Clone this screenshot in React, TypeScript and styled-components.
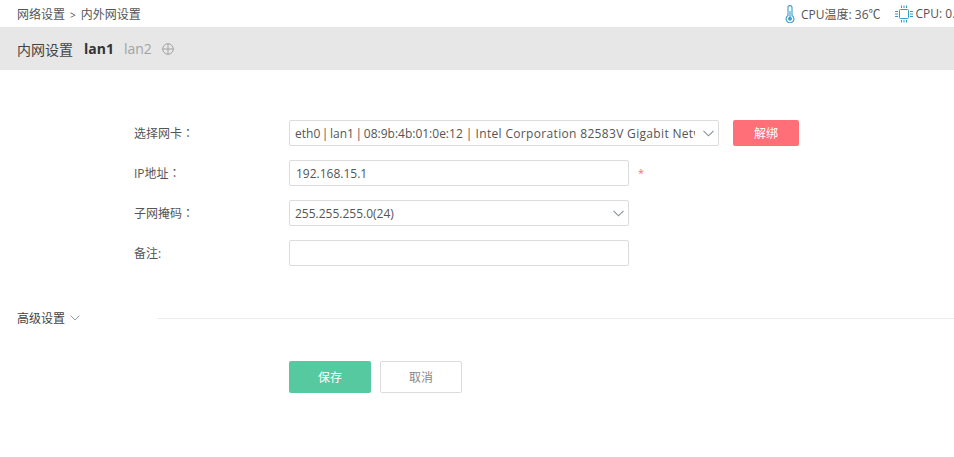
import React from 'react';
import styled, { createGlobalStyle } from 'styled-components';

const GlobalStyle = createGlobalStyle`
  html, body {
    margin: 0;
    padding: 0;
    background: #fff;
    overflow: hidden;
  }
  body {
    font-family: "Open Sans", "Noto Sans CJK SC", sans-serif;
    font-size: 12px;
    color: #555;
  }
`;

const Chevron: React.FC<{ size?: number }> = ({ size = 11 }) => (
  <svg width={size} height={Math.round(size * 0.6)} viewBox="0 0 11 7" fill="none">
    <path d="M0.5 0.8l5 5 5-5" stroke="#8a8f94" strokeWidth="1.1" />
  </svg>
);

const App: React.FC = () => {
  return (
    <Page>
      <GlobalStyle />
      <TopBar>
        <Breadcrumb>
          网络设置<CrumbSeparator>&gt;</CrumbSeparator>内外网设置
        </Breadcrumb>
        <Status>
          <StatusItem>
            <svg width="10" height="18" viewBox="0 0 10 18" fill="none" stroke="#3d9bd0" strokeWidth="1.1">
              <path d="M3 10.5V2.6a2 2 0 0 1 4 0v7.9a3.9 3.9 0 1 1-4 0z" />
              <path d="M5 6v7" />
              <circle cx="5" cy="13.8" r="1.4" fill="#3d9bd0" />
            </svg>
            CPU温度: 36℃
          </StatusItem>
          <ChipItem>
            <svg width="18" height="18" viewBox="0 0 18 18" fill="none" stroke="#2f9fc0" strokeWidth="1">
              <rect x="4.5" y="4.5" width="9" height="9" rx="1" />
              <path d="M6.5 0.5v2.5M9 0.5v2.5M11.5 0.5v2.5M6.5 15v2.5M9 15v2.5M11.5 15v2.5M0 6.5h3M0 9h3M0 11.5h3M15 6.5h3M15 9h3M15 11.5h3" />
            </svg>
            CPU: 0.8%
          </ChipItem>
        </Status>
      </TopBar>

      <TabBar>
        <TabTitle>内网设置</TabTitle>
        <Tab active>lan1</Tab>
        <Tab>lan2</Tab>
        <svg width="12" height="12" viewBox="0 0 12 12" fill="none" stroke="#a3a3a3" strokeWidth="1">
          <circle cx="6" cy="6" r="5.3" />
          <path d="M0.7 6h10.6M6 0.7v10.6" />
        </svg>
      </TabBar>

      <Form>
        <Row>
          <Label>选择网卡：</Label>
          <SelectBox wide>
            <SelectText>
              <PortName>eth0 | lan1 | </PortName>08:9b:4b:01:0e:12 | <NicName>Intel Corporation 82583V Gigabit Network</NicName>
            </SelectText>
            <Chevron />
          </SelectBox>
          <UnbindButton>解绑</UnbindButton>
        </Row>
        <Row>
          <Label>IP地址：</Label>
          <TextInput defaultValue="192.168.15.1" />
          <Required>*</Required>
        </Row>
        <Row>
          <Label>子网掩码：</Label>
          <SelectBox>
            <SelectText>255.255.255.0(24)</SelectText>
            <Chevron />
          </SelectBox>
        </Row>
        <Row>
          <Label>备注:</Label>
          <TextInput />
        </Row>
      </Form>

      <Advanced>
        <AdvancedToggle>
          高级设置
          <Chevron size={10} />
        </AdvancedToggle>
        <Divider />
      </Advanced>

      <Actions>
        <SaveButton>保存</SaveButton>
        <CancelButton>取消</CancelButton>
      </Actions>
    </Page>
  );
};

export default App;

const Page = styled.div`
  width: 954px;
  height: 457px;
  overflow: hidden;
  background: #fff;
`;

const TopBar = styled.div`
  display: flex;
  align-items: center;
  height: 27px;
  padding-left: 17px;
  white-space: nowrap;
`;

const Breadcrumb = styled.div`
  flex: 0 0 768px;
  font-size: 12px;
  color: #555;
`;

const CrumbSeparator = styled.span`
  margin: 0 5px;
  font-size: 10px;
`;

const Status = styled.div`
  display: flex;
  align-items: center;
  gap: 14px;
  flex-shrink: 0;
`;

const StatusItem = styled.div`
  display: flex;
  align-items: center;
  gap: 6px;
  color: #555;
`;

const ChipItem = styled(StatusItem)`
  gap: 3px;
`;

const TabBar = styled.div`
  display: flex;
  align-items: center;
  height: 43px;
  padding-left: 17px;
  background: #e7e7e7;
`;

const TabTitle = styled.div`
  font-size: 14px;
  color: #444;
  margin-right: 11px;
`;

const Tab = styled.div<{ active?: boolean }>`
  font-size: 14px;
  font-weight: ${(p) => (p.active ? 700 : 400)};
  color: ${(p) => (p.active ? '#333' : '#a3a3a3')};
  margin-right: 10px;
`;

const Form = styled.div`
  display: flex;
  flex-direction: column;
  gap: 14px;
  padding: 50px 0 0 134px;
`;

const Row = styled.div`
  display: flex;
  align-items: center;
  height: 26px;
`;

const Label = styled.div`
  flex: 0 0 155px;
  color: #555;
  font-family: "Open Sans", "Noto Sans CJK TC", sans-serif;
`;

const SelectBox = styled.div<{ wide?: boolean }>`
  display: flex;
  align-items: center;
  justify-content: space-between;
  box-sizing: border-box;
  width: ${(p) => (p.wide ? 430 : 340)}px;
  height: 26px;
  padding: 0 4px 0 5px;
  border: 1px solid #dcdcdc;
  border-radius: 2px;
  background: #fff;
`;

const SelectText = styled.div`
  flex: 1;
  overflow: hidden;
  white-space: pre;
  margin-right: 8px;
  color: #555;
`;

const PortName = styled.span`
  word-spacing: -1.5px;
`;

const NicName = styled.span`
  letter-spacing: 0.33px;
`;

const TextInput = styled.input`
  box-sizing: border-box;
  width: 340px;
  height: 26px;
  padding: 0 6px;
  border: 1px solid #dcdcdc;
  border-radius: 2px;
  font: inherit;
  color: #555;
  outline: none;
`;

const Required = styled.span`
  margin-left: 9px;
  margin-top: -2px;
  color: #e8707e;
  font-size: 11px;
`;

const UnbindButton = styled.button`
  width: 66px;
  height: 26px;
  margin-left: 14px;
  padding: 0;
  border: 0;
  border-radius: 2px;
  background: #ff6f77;
  color: #fff;
  font: inherit;
`;

const Advanced = styled.div`
  display: flex;
  align-items: center;
  height: 20px;
  margin-top: 42px;
  padding-left: 17px;
`;

const AdvancedToggle = styled.div`
  display: flex;
  align-items: center;
  gap: 5px;
  flex: 0 0 140px;
  color: #444;
`;

const Divider = styled.div`
  flex: 1;
  height: 1px;
  background: #ececec;
`;

const Actions = styled.div`
  display: flex;
  gap: 9px;
  margin-top: 33px;
  padding-left: 289px;
`;

const SaveButton = styled.button`
  width: 82px;
  height: 32px;
  padding: 0;
  border: 0;
  border-radius: 2px;
  background: #56c9a0;
  color: #fff;
  font: inherit;
`;

const CancelButton = styled.button`
  width: 82px;
  height: 32px;
  padding: 0;
  border: 1px solid #dcdcdc;
  border-radius: 2px;
  background: #fff;
  color: #888;
  font: inherit;
`;
